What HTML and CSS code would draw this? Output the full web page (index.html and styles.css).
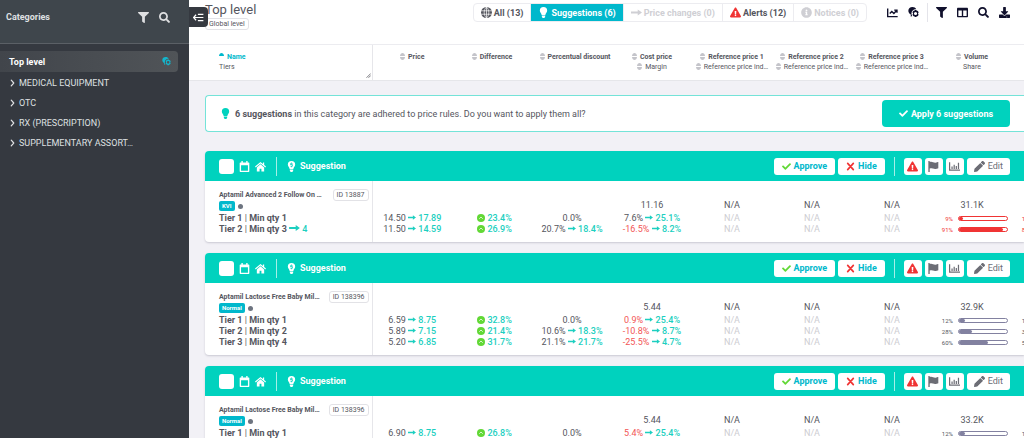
FILE: index.html
```html
<!DOCTYPE html>
<html lang="en">
  <head>
    <meta charset="UTF-8" />
    <meta name="viewport" content="width=device-width, initial-scale=1.0" />
    <title>Price suggestions - Top level</title>
    <link rel="stylesheet" href="styles.css">
  </head>
  <body>
    <!-- Icons -->
    <svg class="sprite" aria-hidden="true">
      <symbol id="i-filter" viewBox="0 0 512 512"><path d="M487.976 0H24.028C2.71 0-8.047 25.866 7.058 40.971L192 225.941V432c0 7.831 3.821 15.17 10.237 19.662l80 55.98C298.02 518.69 320 507.493 320 487.98V225.941l184.947-184.97C520.021 25.896 509.338 0 487.976 0z" /></symbol>
      <symbol id="i-search" viewBox="0 0 512 512"><path d="M505 442.7L405.3 343c-4.500-4.500-10.600-7-17-7H372c27.600-35.300 44-79.700 44-128C416 93.100 322.900 0 208 0S0 93.100 0 208s93.100 208 208 208c48.300 0 92.700-16.400 128-44v16.300c0 6.400 2.500 12.500 7 17l99.700 99.700c9.400 9.400 24.600 9.400 33.900 0l28.300-28.300c9.400-9.400 9.400-24.600.1-34zM208 336c-70.700 0-128-57.200-128-128 0-70.700 57.200-128 128-128 70.700 0 128 57.200 128 128 0 70.700-57.200 128-128 128z" /></symbol>
      <symbol id="i-alert" viewBox="0 0 576 512"><path d="M569.517 440.013C587.975 472.007 564.806 512 527.94 512H48.054c-36.937 0-59.999-40.055-41.577-71.987L246.423 23.985c18.467-32.009 64.72-31.951 83.154 0l239.94 416.028zM288 354c-25.405 0-46 20.595-46 46s20.595 46 46 46 46-20.595 46-46-20.595-46-46-46zm-43.673-165.346l7.418 136c.347 6.364 5.609 11.346 11.982 11.346h48.546c6.373 0 11.635-4.982 11.982-11.346l7.418-136c.375-6.874-5.098-12.654-11.982-12.654h-63.383c-6.884 0-12.356 5.78-11.981 12.654z" /></symbol>
      <symbol id="i-info" viewBox="0 0 512 512"><path d="M256 8C119.043 8 8 119.083 8 256c0 136.997 111.043 248 248 248s248-111.003 248-248C504 119.083 392.957 8 256 8zm0 110c23.196 0 42 18.804 42 42s-18.804 42-42 42-42-18.804-42-42 18.804-42 42-42zm56 254c0 6.627-5.373 12-12 12h-88c-6.627 0-12-5.373-12-12v-24c0-6.627 5.373-12 12-12h12v-64h-12c-6.627 0-12-5.373-12-12v-24c0-6.627 5.373-12 12-12h64c6.627 0 12 5.373 12 12v100h12c6.627 0 12 5.373 12 12v24z" /></symbol>
      <symbol id="i-check" viewBox="0 0 512 512"><path d="M173.898 439.404l-166.400-166.400c-9.997-9.997-9.997-26.206 0-36.204l36.203-36.204c9.997-9.998 26.207-9.998 36.204 0L192 312.690 432.095 72.596c9.997-9.997 26.207-9.997 36.204 0l36.203 36.204c9.997 9.997 9.997 26.206 0 36.204l-294.400 294.401c-9.998 9.997-26.207 9.997-36.204-.001z" /></symbol>
      <symbol id="i-pencil" viewBox="0 0 512 512"><path d="M497.900 142.100l-46.100 46.100c-4.700 4.700-12.300 4.700-17 0l-111-111c-4.700-4.700-4.700-12.300 0-17l46.100-46.100c18.700-18.700 49.100-18.700 67.900 0l60.100 60.100c18.800 18.700 18.800 49.100 0 67.900zM284.200 99.800L21.600 362.400.4 483.900c-2.900 16.400 11.400 30.600 27.800 27.800l121.500-21.300 262.600-262.600c4.700-4.700 4.700-12.300 0-17l-111-111c-4.800-4.700-12.400-4.700-17.100 0z" /></symbol>
      <symbol id="i-columns" viewBox="0 0 512 512"><path d="M464 32H48C21.490 32 0 53.490 0 80v352c0 26.510 21.490 48 48 48h416c26.510 0 48-21.490 48-48V80c0-26.510-21.490-48-48-48zM224 416H64V160h160v256zm224 0H288V160h160v256z" /></symbol>
      <symbol id="i-download" viewBox="0 0 512 512"><path d="M216 0h80c13.300 0 24 10.700 24 24v168h87.700c17.800 0 26.700 21.500 14.100 34.100L269.700 378.300c-7.500 7.500-19.800 7.500-27.300 0L90.100 226.100c-12.600-12.600-3.700-34.100 14.100-34.100H192V24c0-13.300 10.700-24 24-24zm296 376v112c0 13.300-10.700 24-24 24H24c-13.300 0-24-10.700-24-24V376c0-13.300 10.700-24 24-24h146.700l49 49c20.100 20.100 52.500 20.100 72.600 0l49-49H488c13.300 0 24 10.700 24 24zm-124 88c0-11-9-20-20-20s-20 9-20 20 9 20 20 20 20-9 20-20z" /></symbol>
      <symbol id="i-times" viewBox="0 0 16 16"><path d="M3 2.500l10 11M13 2.500l-10 11" fill="none" stroke="currentColor" stroke-width="3" stroke-linecap="round" /></symbol>
      <symbol id="i-chevron" viewBox="0 0 8 12"><path d="M2 1.500l4 4.500-4 4.500" fill="none" stroke="currentColor" stroke-width="2" stroke-linecap="round" stroke-linejoin="round" /></symbol>
      <symbol id="i-arrow" viewBox="0 0 18 10"><path d="M0 3.500h11V0l7 5-7 5V6.500H0z" /></symbol>
      <symbol id="i-bulb" viewBox="0 0 12 18"><path d="M6 0a6 6 0 0 0-6 6c0 2.500 2.500 4 3 7h6c.5-3 3-4.500 3-7a6 6 0 0 0-6-6zM3.200 14h5.600v1.500L7.500 18h-3l-1.300-2.500z" /></symbol>
      <symbol id="i-bulb-price" viewBox="0 0 12 18"><path fill-rule="evenodd" d="M6 0a6 6 0 0 0-6 6c0 2.500 2.500 4 3 7h6c.5-3 3-4.500 3-7a6 6 0 0 0-6-6zM5.400 2.500h1.200v1h1.400v1.200H5.500v.8H8v3.700H6.600v1H5.400v-1H4V8h2.700v-.9H4V3.500h1.400zM3.200 14h5.600v1.500L7.500 18h-3l-1.300-2.500z" /></symbol>
      <symbol id="i-globe" viewBox="0 0 16 16"><circle cx="8" cy="8" r="8" /><path d="M0 5.500h16M0 10.500h16M8 0v16M8 0C3.500 4 3.500 12 8 16M8 0c4.500 4 4.500 12 0 16" fill="none" stroke="#fff" /></symbol>
      <symbol id="i-line" viewBox="0 0 16 16"><path d="M1 2v12h14.500M4 9.500l3-3 3 3 4-4.500M10.500 4.500H14.500V8.500" fill="none" stroke="currentColor" stroke-width="2" /></symbol>
      <symbol id="i-brain" viewBox="0 0 16 16"><path d="M6.500 0C9 0 11 1 12 3.200c-3.500-.5-7 2-7 6.300 0 1.500.4 2.500 1 3.500L4 14v-3C1.500 9.500.5 7.500.5 5.500.5 2 3 0 6.500 0z" /><path fill-rule="evenodd" d="M9.600 4.500h2.800l.4 1.300 1.300-.3 1.400 2.300-.8 1.200v1l.8 1.200-1.400 2.300-1.300-.3-.4 1.300H9.600l-.4-1.300-1.300.3-1.400-2.300.8-1.200V9l-.8-1.200 1.400-2.300 1.300.3zM11 7.200a2.200 2.200 0 1 0 0 4.600 2.200 2.200 0 0 0 0-4.600z" /></symbol>
      <symbol id="i-calendar" viewBox="0 0 16 16"><path fill-rule="evenodd" d="M3.500 0h2v2h5V0h2v2H14a1 1 0 0 1 1 1v12a1 1 0 0 1-1 1H2a1 1 0 0 1-1-1V3a1 1 0 0 1 1-1h1.500zM3 6v8h10V6z" /></symbol>
      <symbol id="i-home" viewBox="0 0 18 16"><path d="M9 .5L0 8l1.200 1.500L9 3l7.800 6.500L18 8l-3-2.500V1.500h-2v2.300zM9 4.500L3 9.500V16h4.500v-4.500h3V16H15V9.500z" /></symbol>
      <symbol id="i-flag" viewBox="0 0 16 16"><path d="M.5 0h2v1.500C6 0 8 3 11 2.500c1.500-.2 3-1 4-1v9c-2 1-4 1.500-6 .8-2.500-.9-4.500-1-6.500-.3v5h-2z" /></symbol>
      <symbol id="i-chart" viewBox="0 0 18 16"><path d="M0 1h2v12h16v2H0zM4 8h2v4H4zM7.500 5h2v7h-2zM11 7h2v5h-2zM14.500 2h2v10h-2z" /></symbol>
      <symbol id="i-up" viewBox="0 0 16 16"><circle cx="8" cy="8" r="8" /><path d="M4.500 9.500L8 6l3.500 3.500" fill="none" stroke="#fff" stroke-width="1.500" /></symbol>
      <symbol id="i-sort" viewBox="0 0 10 14"><path d="M0 6C0 2 3 0 5 0s5 2 5 6zM0 8h10c0 4-3 6-5 6S0 12 0 8z" /></symbol>
      <symbol id="i-sort-asc" viewBox="0 0 10 14"><path d="M0 6C0 2 3 0 5 0s5 2 5 6z" /></symbol>
      <symbol id="i-collapse" viewBox="0 0 18 14"><path d="M5 2.500L1 7l4 4.500M1 7h16M8 2h9M8 12h9" fill="none" stroke="currentColor" stroke-width="2" /></symbol>
      <symbol id="i-grip" viewBox="0 0 10 10"><path d="M1 9.500L9.500 1M5 9.500L9.500 5" fill="none" stroke="currentColor" stroke-width="1.500" /></symbol>
    </svg>

    <div class="layout">
      <!-- Sidebar -->
      <aside class="sidebar">
        <header class="sidebar-header">
          <h2>Categories</h2>
          <button type="button" aria-label="Filter"><svg class="icon"><use href="#i-filter" /></svg></button>
          <button type="button" aria-label="Search"><svg class="icon"><use href="#i-search" /></svg></button>
        </header>
        <nav class="categories">
          <a class="category active" href="#">Top level <svg class="icon-s"><use href="#i-brain" /></svg></a>
          <a class="category" href="#"><svg class="chevron"><use href="#i-chevron" /></svg>MEDICAL EQUIPMENT</a>
          <a class="category" href="#"><svg class="chevron"><use href="#i-chevron" /></svg>OTC</a>
          <a class="category" href="#"><svg class="chevron"><use href="#i-chevron" /></svg>RX (PRESCRIPTION)</a>
          <a class="category" href="#"><svg class="chevron"><use href="#i-chevron" /></svg>SUPPLEMENTARY ASSORT…</a>
        </nav>
      </aside>

      <!-- Main -->
      <main class="main">
        <button class="collapse" type="button" aria-label="Collapse categories"><svg class="icon"><use href="#i-collapse" /></svg></button>

        <header class="topbar">
          <div class="heading">
            <h1>Top level</h1>
            <span class="tag">Global level</span>
          </div>
          <div class="tabs">
            <button type="button"><svg class="icon"><use href="#i-globe" /></svg>All (13)</button>
            <button type="button" class="selected"><svg class="icon"><use href="#i-bulb" /></svg>Suggestions (6)</button>
            <button type="button" disabled><svg class="icon"><use href="#i-arrow" /></svg>Price changes (0)</button>
            <button type="button"><svg class="icon red"><use href="#i-alert" /></svg>Alerts (12)</button>
            <button type="button" disabled><svg class="icon"><use href="#i-info" /></svg>Notices (0)</button>
          </div>
          <div class="tools">
            <button type="button" aria-label="Chart"><svg class="icon"><use href="#i-line" /></svg></button>
            <button type="button" aria-label="Price rules"><svg class="icon"><use href="#i-brain" /></svg></button>
            <span class="divider"></span>
            <button type="button" aria-label="Filter"><svg class="icon"><use href="#i-filter" /></svg></button>
            <button type="button" aria-label="Columns"><svg class="icon"><use href="#i-columns" /></svg></button>
            <button type="button" aria-label="Search"><svg class="icon"><use href="#i-search" /></svg></button>
            <button type="button" aria-label="Download"><svg class="icon"><use href="#i-download" /></svg></button>
          </div>
        </header>

        <!-- Column titles -->
        <div class="columns">
          <table class="grid">
            <colgroup><col class="col-name"><col span="9" class="col-value"></colgroup>
            <thead>
              <tr class="titles">
                <th class="sorted"><svg class="sort"><use href="#i-sort-asc" /></svg>Name</th>
                <th><svg class="sort"><use href="#i-sort" /></svg>Price</th>
                <th><svg class="sort"><use href="#i-sort" /></svg>Difference</th>
                <th class="wide"><svg class="sort"><use href="#i-sort" /></svg>Percentual discount</th>
                <th><svg class="sort"><use href="#i-sort" /></svg>Cost price</th>
                <th><svg class="sort"><use href="#i-sort" /></svg>Reference price 1</th>
                <th><svg class="sort"><use href="#i-sort" /></svg>Reference price 2</th>
                <th><svg class="sort"><use href="#i-sort" /></svg>Reference price 3</th>
                <th><svg class="sort"><use href="#i-sort" /></svg>Volume</th>
                <th></th>
              </tr>
              <tr class="subtitles">
                <td>Tiers<svg class="grip"><use href="#i-grip" /></svg></td>
                <td></td>
                <td></td>
                <td></td>
                <td><svg class="sort"><use href="#i-sort" /></svg>Margin</td>
                <td><svg class="sort"><use href="#i-sort" /></svg>Reference price ind…</td>
                <td><svg class="sort"><use href="#i-sort" /></svg>Reference price ind…</td>
                <td><svg class="sort"><use href="#i-sort" /></svg>Reference price ind…</td>
                <td>Share</td>
                <td></td>
              </tr>
            </thead>
          </table>
        </div>

        <div class="content">
          <!-- Apply all -->
          <section class="notice">
            <svg class="icon"><use href="#i-bulb" /></svg>
            <p><strong>6 suggestions</strong> in this category are adhered to price rules. Do you want to apply them all?</p>
            <button class="apply" type="button"><svg class="icon-s"><use href="#i-check" /></svg>Apply 6 suggestions</button>
          </section>

          <!-- Product 1 -->
          <article class="card">
            <header class="card-header">
              <input type="checkbox" aria-label="Select product">
              <svg class="icon"><use href="#i-calendar" /></svg>
              <svg class="icon"><use href="#i-home" /></svg>
              <span class="divider"></span>
              <svg class="icon"><use href="#i-bulb-price" /></svg>
              <h3>Suggestion</h3>
              <div class="actions">
                <button type="button"><svg class="icon-s green"><use href="#i-check" /></svg>Approve</button>
                <button type="button"><svg class="icon-s red"><use href="#i-times" /></svg>Hide</button>
                <span class="divider"></span>
                <button type="button" class="square" aria-label="Alerts"><svg class="icon red"><use href="#i-alert" /></svg></button>
                <button type="button" class="square" aria-label="Flag"><svg class="icon"><use href="#i-flag" /></svg></button>
                <button type="button" class="square" aria-label="Chart"><svg class="icon"><use href="#i-chart" /></svg></button>
                <button type="button" class="edit"><svg class="icon"><use href="#i-pencil" /></svg>Edit</button>
              </div>
            </header>
            <table class="grid">
              <colgroup><col class="col-name"><col span="9" class="col-value"></colgroup>
              <tbody>
                <tr class="product">
                  <th>
                    <div class="product-name"><span>Aptamil Advanced 2 Follow On …</span><span class="tag">ID 13887</span></div>
                    <div class="product-state"><span class="badge">KVI</span><i class="dot"></i></div>
                  </th>
                  <td></td><td></td><td></td><td>11.16</td><td>N/A</td><td>N/A</td><td>N/A</td><td>31.1K</td><td></td>
                </tr>
                <tr>
                  <th>Tier 1 <i>|</i> Min qty 1</th>
                  <td>14.50 <svg class="arrow"><use href="#i-arrow" /></svg> <b>17.89</b></td>
                  <td class="diff"><svg class="up"><use href="#i-up" /></svg> <b>23.4%</b></td>
                  <td>0.0%</td>
                  <td>7.6% <svg class="arrow"><use href="#i-arrow" /></svg> <b>25.1%</b></td>
                  <td class="none">N/A</td><td class="none">N/A</td><td class="none">N/A</td>
                  <td><div class="share high"><span>9%</span><div class="bar"><div style="width: 9%"></div></div></div></td>
                  <td><div class="share high"><span>10%</span></div></td>
                </tr>
                <tr>
                  <th>Tier 2 <i>|</i> Min qty 3 <svg class="arrow long"><use href="#i-arrow" /></svg> <b>4</b></th>
                  <td>11.50 <svg class="arrow"><use href="#i-arrow" /></svg> <b>14.59</b></td>
                  <td class="diff"><svg class="up"><use href="#i-up" /></svg> <b>26.9%</b></td>
                  <td>20.7% <svg class="arrow"><use href="#i-arrow" /></svg> <b>18.4%</b></td>
                  <td><em>-16.5%</em> <svg class="arrow"><use href="#i-arrow" /></svg> <b>8.2%</b></td>
                  <td class="none">N/A</td><td class="none">N/A</td><td class="none">N/A</td>
                  <td><div class="share high"><span>91%</span><div class="bar"><div style="width: 91%"></div></div></div></td>
                  <td><div class="share high"><span>89%</span></div></td>
                </tr>
              </tbody>
            </table>
          </article>

          <!-- Product 2 -->
          <article class="card">
            <header class="card-header">
              <input type="checkbox" aria-label="Select product">
              <svg class="icon"><use href="#i-calendar" /></svg>
              <svg class="icon"><use href="#i-home" /></svg>
              <span class="divider"></span>
              <svg class="icon"><use href="#i-bulb-price" /></svg>
              <h3>Suggestion</h3>
              <div class="actions">
                <button type="button"><svg class="icon-s green"><use href="#i-check" /></svg>Approve</button>
                <button type="button"><svg class="icon-s red"><use href="#i-times" /></svg>Hide</button>
                <span class="divider"></span>
                <button type="button" class="square" aria-label="Alerts"><svg class="icon red"><use href="#i-alert" /></svg></button>
                <button type="button" class="square" aria-label="Flag"><svg class="icon"><use href="#i-flag" /></svg></button>
                <button type="button" class="square" aria-label="Chart"><svg class="icon"><use href="#i-chart" /></svg></button>
                <button type="button" class="edit"><svg class="icon"><use href="#i-pencil" /></svg>Edit</button>
              </div>
            </header>
            <table class="grid">
              <colgroup><col class="col-name"><col span="9" class="col-value"></colgroup>
              <tbody>
                <tr class="product">
                  <th>
                    <div class="product-name"><span>Aptamil Lactose Free Baby Mil…</span><span class="tag">ID 138396</span></div>
                    <div class="product-state"><span class="badge">Normal</span><i class="dot"></i></div>
                  </th>
                  <td></td><td></td><td></td><td>5.44</td><td>N/A</td><td>N/A</td><td>N/A</td><td>32.9K</td><td></td>
                </tr>
                <tr>
                  <th>Tier 1 <i>|</i> Min qty 1</th>
                  <td>6.59 <svg class="arrow"><use href="#i-arrow" /></svg> <b>8.75</b></td>
                  <td class="diff"><svg class="up"><use href="#i-up" /></svg> <b>32.8%</b></td>
                  <td>0.0%</td>
                  <td><em>0.9%</em> <svg class="arrow"><use href="#i-arrow" /></svg> <b>25.4%</b></td>
                  <td class="none">N/A</td><td class="none">N/A</td><td class="none">N/A</td>
                  <td><div class="share"><span>12%</span><div class="bar"><div style="width: 12%"></div></div></div></td>
                  <td><div class="share"><span>12%</span></div></td>
                </tr>
                <tr>
                  <th>Tier 2 <i>|</i> Min qty 2</th>
                  <td>5.89 <svg class="arrow"><use href="#i-arrow" /></svg> <b>7.15</b></td>
                  <td class="diff"><svg class="up"><use href="#i-up" /></svg> <b>21.4%</b></td>
                  <td>10.6% <svg class="arrow"><use href="#i-arrow" /></svg> <b>18.3%</b></td>
                  <td><em>-10.8%</em> <svg class="arrow"><use href="#i-arrow" /></svg> <b>8.7%</b></td>
                  <td class="none">N/A</td><td class="none">N/A</td><td class="none">N/A</td>
                  <td><div class="share"><span>28%</span><div class="bar"><div style="width: 28%"></div></div></div></td>
                  <td><div class="share"><span>30%</span></div></td>
                </tr>
                <tr>
                  <th>Tier 3 <i>|</i> Min qty 4</th>
                  <td>5.20 <svg class="arrow"><use href="#i-arrow" /></svg> <b>6.85</b></td>
                  <td class="diff"><svg class="up"><use href="#i-up" /></svg> <b>31.7%</b></td>
                  <td>21.1% <svg class="arrow"><use href="#i-arrow" /></svg> <b>21.7%</b></td>
                  <td><em>-25.5%</em> <svg class="arrow"><use href="#i-arrow" /></svg> <b>4.7%</b></td>
                  <td class="none">N/A</td><td class="none">N/A</td><td class="none">N/A</td>
                  <td><div class="share"><span>60%</span><div class="bar"><div style="width: 60%"></div></div></div></td>
                  <td><div class="share"><span>58%</span></div></td>
                </tr>
              </tbody>
            </table>
          </article>

          <!-- Product 3 -->
          <article class="card">
            <header class="card-header">
              <input type="checkbox" aria-label="Select product">
              <svg class="icon"><use href="#i-calendar" /></svg>
              <svg class="icon"><use href="#i-home" /></svg>
              <span class="divider"></span>
              <svg class="icon"><use href="#i-bulb-price" /></svg>
              <h3>Suggestion</h3>
              <div class="actions">
                <button type="button"><svg class="icon-s green"><use href="#i-check" /></svg>Approve</button>
                <button type="button"><svg class="icon-s red"><use href="#i-times" /></svg>Hide</button>
                <span class="divider"></span>
                <button type="button" class="square" aria-label="Alerts"><svg class="icon red"><use href="#i-alert" /></svg></button>
                <button type="button" class="square" aria-label="Flag"><svg class="icon"><use href="#i-flag" /></svg></button>
                <button type="button" class="square" aria-label="Chart"><svg class="icon"><use href="#i-chart" /></svg></button>
                <button type="button" class="edit"><svg class="icon"><use href="#i-pencil" /></svg>Edit</button>
              </div>
            </header>
            <table class="grid">
              <colgroup><col class="col-name"><col span="9" class="col-value"></colgroup>
              <tbody>
                <tr class="product">
                  <th>
                    <div class="product-name"><span>Aptamil Lactose Free Baby Mil…</span><span class="tag">ID 138396</span></div>
                    <div class="product-state"><span class="badge">Normal</span><i class="dot"></i></div>
                  </th>
                  <td></td><td></td><td></td><td>5.44</td><td>N/A</td><td>N/A</td><td>N/A</td><td>33.2K</td><td></td>
                </tr>
                <tr>
                  <th>Tier 1 <i>|</i> Min qty 1</th>
                  <td>6.90 <svg class="arrow"><use href="#i-arrow" /></svg> <b>8.75</b></td>
                  <td class="diff"><svg class="up"><use href="#i-up" /></svg> <b>26.8%</b></td>
                  <td>0.0%</td>
                  <td><em>5.4%</em> <svg class="arrow"><use href="#i-arrow" /></svg> <b>25.4%</b></td>
                  <td class="none">N/A</td><td class="none">N/A</td><td class="none">N/A</td>
                  <td><div class="share"><span>12%</span><div class="bar"><div style="width: 12%"></div></div></div></td>
                  <td><div class="share"><span>12%</span></div></td>
                </tr>
              </tbody>
            </table>
          </article>
        </div>
      </main>
    </div>
  </body>
</html>
```

FILE: styles.css
```css
/* Reset */
* {
  box-sizing: border-box;
}
body,
h1,
h2,
h3,
p {
  margin: 0;
}
body {
  font-family: Roboto, "Liberation Sans", sans-serif;
  font-size: 9px;
  color: #55565e;
  background-color: #f2f1f6;
}
button {
  display: flex;
  align-items: center;
  justify-content: center;
  padding: 0;
  border: 0;
  background: none;
  font: inherit;
  color: inherit;
}
a {
  color: inherit;
  text-decoration: none;
}
svg {
  flex: none;
  fill: currentColor;
}

/* Icons */
.sprite {
  display: none;
}
.icon {
  width: 11px;
  height: 11px;
}
.icon-s {
  width: 9px;
  height: 9px;
}
.red {
  color: #f03434;
}
.green {
  color: #62d836;
}
.divider {
  width: 1px;
  height: 19px;
  background-color: #e4e4ea;
}

/* Layout */
.layout {
  display: grid;
  grid-template-columns: 189px minmax(0, 1fr);
  height: 100vh;
  overflow: hidden;
}

/* Sidebar */
.sidebar {
  background-color: #353940;
  color: #dfe0e2;
}
.sidebar-header {
  display: flex;
  gap: 10px;
  height: 44px;
  padding: 0 19px 9px 6px;
  align-items: center;
  background-color: #3f464c;
  border-bottom: 1px solid #5b6066;
}
.sidebar-header h2 {
  flex: 1;
  font-size: 9px;
}
.categories {
  padding: 7px 11px 0 0;
}
.category {
  display: flex;
  align-items: center;
  gap: 4px;
  height: 20px;
  padding-left: 10px;
}
.category.active {
  justify-content: space-between;
  height: 21px;
  margin-bottom: 1px;
  padding: 0 7px 0 9px;
  border-radius: 0 4px 4px 0;
  background: linear-gradient(90deg, #41454b, #505458);
  color: #fff;
  font-weight: bold;
}
.category.active svg {
  color: #13b5cb;
}
.chevron {
  width: 5px;
  height: 8px;
}

/* Top bar */
.main {
  position: relative;
  min-width: 0;
}
.collapse {
  position: absolute;
  top: 7px;
  left: 0;
  width: 19px;
  height: 20px;
  border-radius: 0 4px 4px 0;
  background-color: #353940;
  color: #fff;
}
.topbar {
  display: flex;
  align-items: flex-start;
  height: 45px;
  padding: 3px 14px 0 16px;
  background-color: #fff;
  border-bottom: 1px solid #ececf0;
}
.heading {
  flex: 1;
}
h1 {
  font-size: 13px;
  font-weight: normal;
  line-height: 13px;
  margin-bottom: 2px;
}
.tag {
  padding: 0 3px;
  border: 1px solid #e2e2e6;
  border-radius: 3px;
  background-color: #fff;
  font-size: 7px;
  font-weight: normal;
  line-height: 10px;
}
.heading .tag {
  display: inline-block;
}
.tabs {
  display: flex;
  border: 1px solid #ececf0;
  border-radius: 4px;
  font-weight: bold;
}
.tabs button {
  gap: 2px;
  height: 17px;
  padding: 0 7px;
  border-left: 1px solid #ececf0;
}
.tabs button:first-child {
  border-left: 0;
}
.tabs button:disabled {
  color: #cfcfd4;
}
.tabs .selected {
  background-color: #00b8cc;
  color: #fff;
}
.tools {
  display: flex;
  align-items: center;
  gap: 10px;
  margin-left: 20px;
  color: #10102c;
}
.tools .divider {
  margin: 0 -2px;
}

/* Tables, shared by the column titles and the cards */
.grid {
  table-layout: fixed;
  width: 887px;
  border-collapse: collapse;
  white-space: nowrap;
}
.col-name {
  width: 167px;
}
.col-value {
  width: 80px;
}
.grid th,
.grid td {
  height: 11px;
  padding: 0;
  line-height: 11px;
  text-align: center;
}
.grid tr > :first-child {
  padding-left: 14px;
  border-right: 1px solid #e6e6ea;
  text-align: left;
}

/* Column titles */
.columns {
  padding-left: 16px;
  overflow: hidden;
  background-color: #fff;
  border-bottom: 1px solid #e6e6ea;
}
.grid .titles > *,
.grid .subtitles > * {
  font-size: 7px;
  line-height: 10px;
}
.grid .titles > * {
  height: 17px;
  padding-top: 7px;
}
.grid .subtitles > * {
  height: 18px;
  padding-bottom: 8px;
}
.grid .wide {
  padding-left: 6px;
}
.columns .sorted {
  color: #00b8cc;
}
.sort {
  width: 5px;
  height: 7px;
  margin: 0 3px -1px 0;
  color: #c4c4ca;
}
.sorted .sort {
  color: inherit;
}
.grip {
  float: right;
  width: 5px;
  height: 5px;
  margin: 11px 1px -6px 0;
}

/* Content */
.content {
  display: flex;
  flex-direction: column;
  gap: 11px;
  padding: 14px 0 0 16px;
}
.notice {
  display: flex;
  align-items: center;
  height: 37px;
  margin-bottom: 8px;
  padding: 0 14px;
  border: 1px solid #74e3d8;
  border-right: 0;
  border-radius: 4px 0 0 4px;
  background-color: #fff;
}
.notice .icon {
  margin-right: 4px;
  color: #00d2be;
}
.notice p {
  flex: 1;
}
.apply {
  gap: 3px;
  width: 128px;
  height: 27px;
  border-radius: 4px;
  background-color: #00d2be;
  color: #fff;
  font-weight: bold;
}

/* Cards */
.card {
  flex: none;
  overflow: hidden;
  border-radius: 4px 0 0 4px;
  background-color: #fff;
  box-shadow: 0 1px 2px #c9c8d2;
}
.card-header {
  display: flex;
  align-items: center;
  gap: 5px;
  height: 30px;
  padding: 0 14px;
  background-color: #00d2be;
  color: #fff;
}
.card-header input {
  appearance: none;
  width: 15px;
  height: 15px;
  margin: 0;
  border-radius: 3px;
  background-color: #fff;
}
.card-header h3 {
  flex: 1;
  margin-left: -2px;
  font-size: 9px;
}
.card-header .divider {
  margin: 0 4px 0 5px;
  background-color: #a5efe8;
}
.actions {
  display: flex;
  align-items: center;
  gap: 3px;
}
.card-header .actions .divider {
  margin: 0 6px;
}
.actions button {
  gap: 3px;
  height: 17px;
  padding: 0 8px;
  border-radius: 3px;
  background-color: #fff;
  color: #00b8cc;
  font-weight: bold;
}
.actions .square {
  width: 18px;
  padding: 0;
  color: #6c6d75;
}
.actions .edit {
  padding: 0 7px;
  color: #6c6d75;
  font-weight: normal;
}

/* Product rows */
.card tr:last-child > * {
  height: 18px;
  padding-bottom: 7px;
}
.card tr.product > * {
  height: 32px;
  padding-bottom: 2px;
  vertical-align: bottom;
}
.grid th i {
  font-style: normal;
  font-weight: normal;
}
.product-name {
  display: flex;
  align-items: center;
  justify-content: space-between;
  padding-right: 3px;
  font-size: 7px;
}
.product-state {
  display: flex;
  align-items: center;
  gap: 3px;
}
.badge {
  padding: 0 3px;
  border-radius: 2px;
  background-color: #00b8cc;
  color: #fff;
  font-size: 6px;
  line-height: 10px;
}
.dot {
  width: 5px;
  height: 5px;
  border-radius: 50%;
  background-color: #6d7480;
}
.grid b {
  color: #1ccfc0;
  font-weight: 500;
}
.grid em {
  color: #f25555;
  font-style: normal;
}
.none {
  color: #cdcdd2;
}
.arrow {
  width: 8px;
  height: 5px;
  margin-bottom: 1px;
  color: #1ccfc0;
}
.arrow.long {
  width: 11px;
  height: 6px;
}
.grid .diff {
  padding-left: 5px;
}
.up {
  width: 8px;
  height: 8px;
  margin-bottom: -1px;
  color: #62d836;
}

/* Share bars */
.share {
  --bar: #8281a0;
  display: flex;
  align-items: center;
  gap: 5px;
  padding: 0 4px 0 9px;
  font-size: 6px;
}
.share.high {
  --bar: #f03434;
  color: var(--bar);
}
.share span {
  width: 12px;
  text-align: right;
}
.bar {
  flex: 1;
  height: 5px;
  overflow: hidden;
  border: 1px solid var(--bar);
  border-radius: 3px;
}
.bar div {
  height: 100%;
  border-radius: 0 2px 2px 0;
  background-color: var(--bar);
}
```
